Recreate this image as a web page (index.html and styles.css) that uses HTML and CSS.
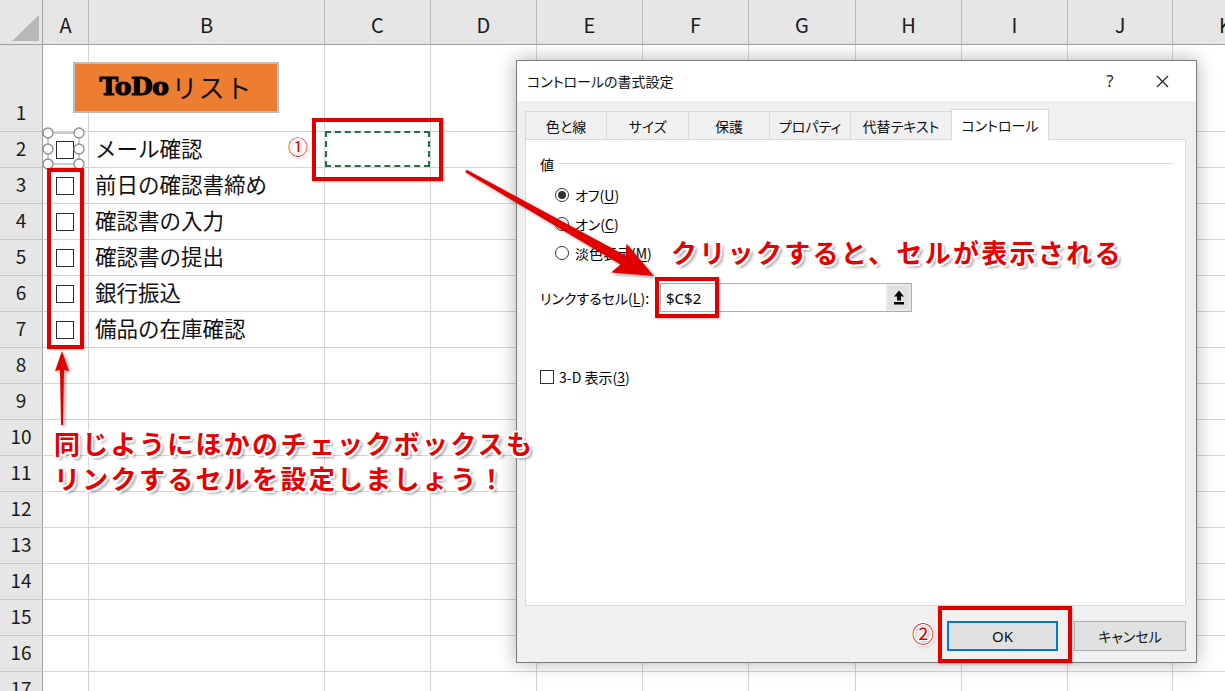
FILE: index.html
```html
<!DOCTYPE html>
<html lang="ja">
<head>
<meta charset="utf-8">
<title>ToDoリスト</title>
<link rel="stylesheet" href="styles.css">
</head>
<body>
<div class="screen">
  <div class="sheet">
    <div class="corner"><span class="tri"></span></div>
    <div class="ch">A</div><div class="ch">B</div><div class="ch">C</div><div class="ch">D</div><div class="ch">E</div><div class="ch">F</div><div class="ch">G</div><div class="ch">H</div><div class="ch">I</div><div class="ch">J</div><div class="ch">K</div>

    <div class="rh">1</div><i></i><i></i><i></i><i></i><i></i><i></i><i></i><i></i><i></i><i></i><i></i>
    <div class="rh">2</div><i class="ca"><span class="cbox"></span></i><i class="t">メール確認</i><i class="cc"><span class="marquee"></span></i><i></i><i></i><i></i><i></i><i></i><i></i><i></i><i></i>
    <div class="rh">3</div><i class="ca"><span class="cbox"></span></i><i class="t">前日の確認書締め</i><i></i><i></i><i></i><i></i><i></i><i></i><i></i><i></i><i></i>
    <div class="rh">4</div><i class="ca"><span class="cbox"></span></i><i class="t">確認書の入力</i><i></i><i></i><i></i><i></i><i></i><i></i><i></i><i></i><i></i>
    <div class="rh">5</div><i class="ca"><span class="cbox"></span></i><i class="t">確認書の提出</i><i></i><i></i><i></i><i></i><i></i><i></i><i></i><i></i><i></i>
    <div class="rh">6</div><i class="ca"><span class="cbox"></span></i><i class="t">銀行振込</i><i></i><i></i><i></i><i></i><i></i><i></i><i></i><i></i><i></i>
    <div class="rh">7</div><i class="ca"><span class="cbox"></span></i><i class="t">備品の在庫確認</i><i></i><i></i><i></i><i></i><i></i><i></i><i></i><i></i><i></i>
    <div class="rh">8</div><i></i><i></i><i></i><i></i><i></i><i></i><i></i><i></i><i></i><i></i><i></i>
    <div class="rh">9</div><i></i><i></i><i></i><i></i><i></i><i></i><i></i><i></i><i></i><i></i><i></i>
    <div class="rh">10</div><i></i><i></i><i></i><i></i><i></i><i></i><i></i><i></i><i></i><i></i><i></i>
    <div class="rh">11</div><i></i><i></i><i></i><i></i><i></i><i></i><i></i><i></i><i></i><i></i><i></i>
    <div class="rh">12</div><i></i><i></i><i></i><i></i><i></i><i></i><i></i><i></i><i></i><i></i><i></i>
    <div class="rh">13</div><i></i><i></i><i></i><i></i><i></i><i></i><i></i><i></i><i></i><i></i><i></i>
    <div class="rh">14</div><i></i><i></i><i></i><i></i><i></i><i></i><i></i><i></i><i></i><i></i><i></i>
    <div class="rh">15</div><i></i><i></i><i></i><i></i><i></i><i></i><i></i><i></i><i></i><i></i><i></i>
    <div class="rh">16</div><i></i><i></i><i></i><i></i><i></i><i></i><i></i><i></i><i></i><i></i><i></i>
    <div class="rh">17</div><i></i><i></i><i></i><i></i><i></i><i></i><i></i><i></i><i></i><i></i><i></i>
  </div>

  <div class="todo"><span class="todo-en">ToDo</span><span class="todo-ja">リスト</span></div>

  <svg class="handles" width="1225" height="691" viewBox="0 0 1225 691">
    <rect x="48" y="133" width="31" height="31" fill="none" stroke="#9a9a9a" stroke-width="1"/>
    <g fill="#fff" stroke="#8c8c8c" stroke-width="1.3">
      <circle cx="48" cy="133" r="5"/><circle cx="79" cy="133" r="5"/>
      <circle cx="48" cy="149" r="5"/><circle cx="79" cy="149" r="5"/>
      <circle cx="48" cy="164" r="5"/><circle cx="79" cy="164" r="5"/>
    </g>
  </svg>

  <div class="rframe rf-checks"></div>
  <div class="rframe rf-c2"></div>
  <div class="num num1">①</div>

  <div class="dialog">
    <div class="dlg-title">
      <span class="dlg-name">コントロールの書式設定</span>
      <span class="dlg-help">?</span>
      <span class="dlg-close"><svg width="13" height="13" viewBox="0 0 13 13"><path d="M1 1L12 12M12 1L1 12" stroke="#222" stroke-width="1.2" fill="none"/></svg></span>
    </div>
    <div class="dlg-body">
      <div class="tabs">
        <div class="tab">色と線</div>
        <div class="tab">サイズ</div>
        <div class="tab">保護</div>
        <div class="tab">プロパティ</div>
        <div class="tab">代替テキスト</div>
        <div class="tab active">コントロール</div>
      </div>
      <div class="panel">
        <div class="group-title"><span>値</span><span class="group-line"></span></div>
        <div class="radios">
          <div class="radio"><span class="rb checked"></span><span>オフ(<u>U</u>)</span></div>
          <div class="radio"><span class="rb"></span><span>オン(<u>C</u>)</span></div>
          <div class="radio"><span class="rb"></span><span>淡色表示(<u>M</u>)</span></div>
        </div>
        <div class="link-row">
          <span class="link-label">リンクするセル(<u>L</u>):</span>
          <div class="ref-input">
            <span class="ref-val">$C$2</span>
            <span class="ref-btn"><svg width="12" height="15" viewBox="0 0 12 15"><path d="M6 0.5L11 6.5H8V10.5H4V6.5H1Z" fill="#000"/><rect x="1" y="12" width="10" height="2.5" fill="#000"/></svg></span>
          </div>
        </div>
        <div class="cb3d"><span class="cbx"></span><span>3-D 表示(<u>3</u>)</span></div>
      </div>
      <div class="buttons">
        <div class="btn ok">OK</div>
        <div class="btn">キャンセル</div>
      </div>
    </div>
  </div>

  <div class="rframe rf-ref"></div>
  <div class="rframe rf-ok"></div>
  <div class="num num2">②</div>

  <svg class="arrows" width="1225" height="691" viewBox="0 0 1225 691">
    <defs>
      <filter id="sh" x="-20%" y="-20%" width="140%" height="140%">
        <feDropShadow dx="2" dy="2" stdDeviation="1.5" flood-color="#000" flood-opacity="0.35"/>
      </filter>
    </defs>
    <polygon filter="url(#sh)" fill="#e00000" points="466.7,169.7 625.5,255.5 626.5,243.5 654,276 611,272.5 620.5,264.5 465.3,172.3"/>
    <polygon filter="url(#sh)" fill="#e00000" points="61,425 63,425 64,370 69,371 62,351 55,371 60,370"/>
  </svg>

  <div class="note note-click">クリックすると、セルが表示される</div>
  <div class="note note-other">同じようにほかのチェックボックスも<br>リンクするセルを設定しましょう！</div>
</div>
</body>
</html>
```

FILE: styles.css
```css
* { box-sizing: border-box; }
html, body { margin: 0; padding: 0; }
body {
  width: 1225px;
  height: 691px;
  overflow: hidden;
  background: #fff;
  font-family: "Noto Sans CJK JP", "Noto Sans", sans-serif;
  color: #000;
}
.screen {
  position: relative;
  width: 1225px;
  height: 691px;
  overflow: hidden;
}

/* ---------- spreadsheet ---------- */
.sheet {
  display: grid;
  grid-template-columns: 43px 46px 236px 106px 106px 106px 106px 107px 106px 106px 105px 106px;
  grid-template-rows: 45px 87px repeat(16, 36px);
}
.sheet > i {
  display: flex;
  font-style: normal;
  border-right: 1px solid #d4d4d4;
  border-bottom: 1px solid #d4d4d4;
  min-width: 0;
}
.corner {
  background: #e6e6e6;
  border-right: 1px solid #9e9e9e;
  border-bottom: 1px solid #9e9e9e;
  position: relative;
}
.tri {
  position: absolute;
  left: 12px;
  top: 15px;
  width: 27px;
  height: 26px;
  background: #b8b8b8;
  clip-path: polygon(100% 0, 100% 100%, 0 100%);
}
.ch {
  background: #e6e6e6;
  border-right: 1px solid #b9b9b9;
  border-bottom: 1px solid #9e9e9e;
  display: flex;
  align-items: flex-end;
  justify-content: center;
  padding-bottom: 5px;
  font-size: 20px;
  line-height: 28px;
  color: #1a1a1a;
}
.rh {
  background: #e6e6e6;
  border-right: 1px solid #9e9e9e;
  border-bottom: 1px solid #c6c6c6;
  display: flex;
  align-items: flex-end;
  justify-content: center;
  padding-bottom: 5px;
  font-size: 19px;
  line-height: 28px;
  color: #1a1a1a;
}
.sheet > .ca {
  align-items: center;
  justify-content: center;
  padding-right: 2px;
}
.cbox {
  width: 18px;
  height: 18px;
  border: 1.5px solid #2b2b2b;
  background: #fff;
}
.sheet > .t {
  align-items: flex-end;
  padding: 0 0 4px 6px;
  font-size: 21.5px;
  line-height: 30px;
  white-space: nowrap;
  color: #111;
}
.sheet > .cc {
  padding: 0;
}
.marquee {
  flex: 1;
  border: 2px dashed #217346;
  margin: -1px 0 0 0;
}

/* ---------- ToDo shape ---------- */
.todo {
  position: absolute;
  left: 73px;
  top: 62px;
  width: 206px;
  height: 51px;
  background: #ed7d31;
  border: 2px solid #bdbdbd;
  display: flex;
  align-items: center;
  justify-content: center;
  gap: 3px;
  padding-bottom: 2px;
}
.todo-en {
  font-family: "DejaVu Serif", "Liberation Serif", serif;
  font-weight: 900;
  font-size: 25px;
  letter-spacing: -0.5px;
  color: #000;
  -webkit-text-stroke: 1.1px #000;
}
.todo-ja {
  font-size: 26px;
  color: #111;
  letter-spacing: 1px;
}

.handles, .arrows {
  position: absolute;
  left: 0;
  top: 0;
  pointer-events: none;
}

/* ---------- red frames ---------- */
.rframe {
  position: absolute;
  border: 4px solid #e00000;
  box-shadow: 1px 1px 2px rgba(0,0,0,0.25);
}
.rf-checks { left: 47px; top: 168px; width: 37px; height: 181px; }
.rf-c2 { left: 312px; top: 118px; width: 131px; height: 63px; }
.rf-ref { left: 655px; top: 277px; width: 64px; height: 41px; }
.rf-ok { left: 938px; top: 606px; width: 134px; height: 57px; }

.num {
  position: absolute;
  color: #e00000;
  line-height: 1;
  text-shadow: 0 0 2px #fff, 1px 1px 0 #fff, -1px -1px 0 #fff, 1px -1px 0 #fff, -1px 1px 0 #fff, 2px 2px 3px rgba(0,0,0,0.35);
}
.num1 { left: 288px; top: 137px; font-size: 20px; }
.num2 { left: 912px; top: 621px; font-size: 22px; }

/* ---------- dialog ---------- */
.dialog {
  position: absolute;
  left: 516px;
  top: 60px;
  width: 681px;
  height: 603px;
  border: 1px solid #7a7a7a;
  background: #f0f0f0;
  box-shadow: 0 0 18px rgba(0,0,0,0.3);
  font-size: 14px;
  font-feature-settings: "palt";
  display: flex;
  flex-direction: column;
}
.dlg-title {
  height: 40px;
  background: #fff;
  display: flex;
  align-items: center;
  padding-left: 10px;
}
.dlg-name {
  flex: 1;
  font-size: 14px;
  color: #111;
}
.dlg-help {
  width: 30px;
  text-align: center;
  margin-right: 14px;
  font-size: 16px;
  font-family: "Noto Sans", sans-serif;
  color: #222;
}
.dlg-close {
  width: 46px;
  margin-right: 11px;
  display: flex;
  justify-content: center;
}
.dlg-body {
  flex: 1;
  padding: 8px 10px 0 8px;
  display: flex;
  flex-direction: column;
}
.tabs {
  display: flex;
  align-items: flex-end;
  height: 30px;
  position: relative;
  z-index: 1;
}
.tab {
  height: 28px;
  border: 1px solid #d9d9d9;
  border-bottom: none;
  margin-right: -1px;
  display: flex;
  align-items: center;
  justify-content: center;
  color: #111;
  background: #f0f0f0;
}
.tab:nth-child(1) { width: 82px; }
.tab:nth-child(2) { width: 83px; }
.tab:nth-child(3) { width: 82px; }
.tab:nth-child(4) { width: 82px; }
.tab:nth-child(5) { width: 102px; }
.tab.active {
  width: 98px;
  height: 31px;
  margin-bottom: -1px;
  background: #fff;
  padding-bottom: 1px;
}
.panel {
  height: 467px;
  background: #fff;
  border: 1px solid #d9d9d9;
  padding: 0 12px 0 14px;
}
.group-title {
  display: flex;
  align-items: center;
  height: 20px;
  margin-top: 14px;
}
.group-line {
  flex: 1;
  height: 1px;
  background: #dcdcdc;
  margin-left: 5px;
  margin-top: -2px;
}
.radios {
  margin-top: 6px;
  padding-left: 15px;
}
.radio {
  height: 29px;
  display: flex;
  align-items: center;
  gap: 6px;
}
.rb {
  width: 14px;
  height: 14px;
  border-radius: 50%;
  border: 1px solid #333;
  background: #fff;
  display: flex;
  align-items: center;
  justify-content: center;
}
.rb.checked::after {
  content: "";
  width: 8px;
  height: 8px;
  border-radius: 50%;
  background: #333;
}
u { text-decoration-thickness: 1px; text-underline-offset: 2px; }
.link-row {
  display: flex;
  align-items: center;
  margin-top: 16px;
  height: 29px;
}
.link-label {
  width: 120px;
}
.ref-input {
  width: 252px;
  height: 29px;
  border: 1px solid #adadad;
  display: flex;
  align-items: center;
  background: #fff;
}
.ref-val {
  flex: 1;
  padding-left: 5px;
  font-size: 15px;
  font-family: "Noto Sans", "Noto Sans CJK JP", sans-serif;
  color: #000;
}
.ref-btn {
  width: 25px;
  height: 27px;
  background: #e1e1e1;
  border: 2px solid #e9e9e9;
  display: flex;
  align-items: center;
  justify-content: center;
}
.cb3d {
  display: flex;
  align-items: center;
  gap: 5px;
  margin-top: 55px;
  height: 20px;
}
.cbx {
  width: 14px;
  height: 14px;
  border: 1px solid #333;
  background: #fff;
}
.buttons {
  display: flex;
  justify-content: flex-end;
  gap: 16px;
  margin-top: 15px;
}
.btn {
  width: 112px;
  height: 30px;
  background: #e1e1e1;
  border: 1px solid #adadad;
  display: flex;
  align-items: center;
  justify-content: center;
  font-size: 14px;
  color: #111;
}
.btn.ok {
  width: 111px;
  border: 2px solid #0078d7;
  font-family: "Noto Sans", sans-serif;
  font-size: 15px;
}

/* ---------- annotations ---------- */
.note {
  position: absolute;
  color: #e60000;
  font-family: "Noto Sans CJK JP", sans-serif;
  font-weight: 700;
  font-size: 26px;
  line-height: 35px;
  letter-spacing: 2.3px;
  white-space: nowrap;
  text-shadow:
    2px 0 0 #fff, -2px 0 0 #fff, 0 2px 0 #fff, 0 -2px 0 #fff,
    1.5px 1.5px 0 #fff, -1.5px 1.5px 0 #fff, 1.5px -1.5px 0 #fff, -1.5px -1.5px 0 #fff,
    3px 3px 3px rgba(0,0,0,0.4);
}
.note-click { left: 671px; top: 234px; }
.note-other { left: 54px; top: 425px; }
```
